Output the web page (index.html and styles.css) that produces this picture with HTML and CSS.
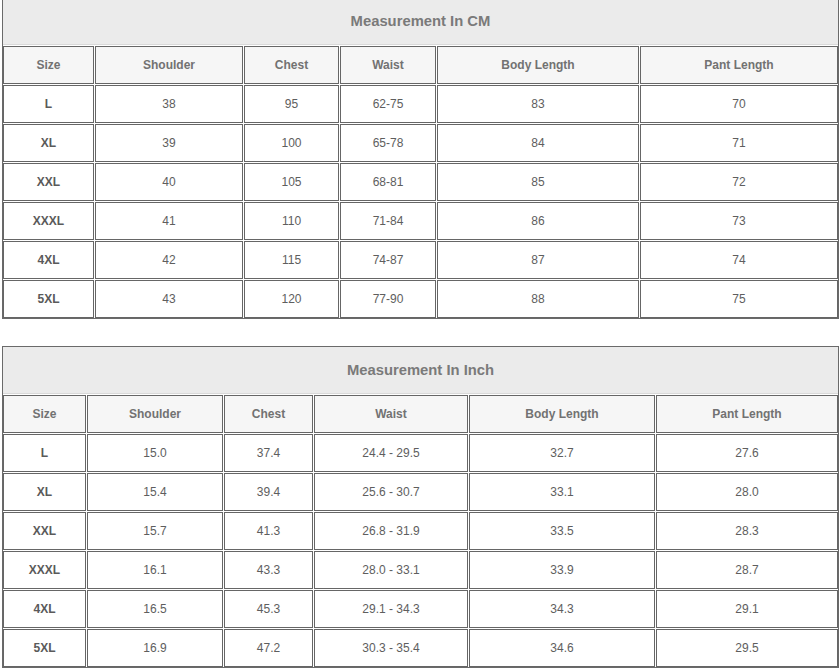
FILE: index.html
```html
<!DOCTYPE html>
<html>
<head>
<meta charset="utf-8">
<link rel="stylesheet" href="styles.css">
</head>
<body>
<div class="page">
  <div class="chart chart--cm chart--cropped">
    <div class="title">Measurement In CM</div>
    <div class="cell head">Size</div><div class="cell head">Shoulder</div><div class="cell head">Chest</div><div class="cell head">Waist</div><div class="cell head">Body Length</div><div class="cell head">Pant Length</div>
    <div class="cell size">L</div><div class="cell">38</div><div class="cell">95</div><div class="cell">62-75</div><div class="cell">83</div><div class="cell">70</div>
    <div class="cell size">XL</div><div class="cell">39</div><div class="cell">100</div><div class="cell">65-78</div><div class="cell">84</div><div class="cell">71</div>
    <div class="cell size">XXL</div><div class="cell">40</div><div class="cell">105</div><div class="cell">68-81</div><div class="cell">85</div><div class="cell">72</div>
    <div class="cell size">XXXL</div><div class="cell">41</div><div class="cell">110</div><div class="cell">71-84</div><div class="cell">86</div><div class="cell">73</div>
    <div class="cell size">4XL</div><div class="cell">42</div><div class="cell">115</div><div class="cell">74-87</div><div class="cell">87</div><div class="cell">74</div>
    <div class="cell size">5XL</div><div class="cell">43</div><div class="cell">120</div><div class="cell">77-90</div><div class="cell">88</div><div class="cell">75</div>
  </div>

  <div class="chart chart--inch">
    <div class="title">Measurement In Inch</div>
    <div class="cell head">Size</div><div class="cell head">Shoulder</div><div class="cell head">Chest</div><div class="cell head">Waist</div><div class="cell head">Body Length</div><div class="cell head">Pant Length</div>
    <div class="cell size">L</div><div class="cell">15.0</div><div class="cell">37.4</div><div class="cell">24.4 - 29.5</div><div class="cell">32.7</div><div class="cell">27.6</div>
    <div class="cell size">XL</div><div class="cell">15.4</div><div class="cell">39.4</div><div class="cell">25.6 - 30.7</div><div class="cell">33.1</div><div class="cell">28.0</div>
    <div class="cell size">XXL</div><div class="cell">15.7</div><div class="cell">41.3</div><div class="cell">26.8 - 31.9</div><div class="cell">33.5</div><div class="cell">28.3</div>
    <div class="cell size">XXXL</div><div class="cell">16.1</div><div class="cell">43.3</div><div class="cell">28.0 - 33.1</div><div class="cell">33.9</div><div class="cell">28.7</div>
    <div class="cell size">4XL</div><div class="cell">16.5</div><div class="cell">45.3</div><div class="cell">29.1 - 34.3</div><div class="cell">34.3</div><div class="cell">29.1</div>
    <div class="cell size">5XL</div><div class="cell">16.9</div><div class="cell">47.2</div><div class="cell">30.3 - 35.4</div><div class="cell">34.6</div><div class="cell">29.5</div>
  </div>
</div>
</body>
</html>
```

FILE: styles.css
```css
html, body {
  margin: 0;
  padding: 0;
  background: #ffffff;
}

.page {
  padding: 0 0 0 2px;
  font-family: "Liberation Sans", Arial, sans-serif;
}

.chart {
  display: grid;
  width: 835px;
  gap: 1px;
  border: 1px solid #6a6a6a;
  background: #ffffff;
  grid-auto-rows: 38px;
  grid-template-rows: 47px;
}

.chart--cropped {
  margin-top: -3px;
}

.chart--cm {
  grid-template-columns: 91px 148px 95px 96px 202px 198px;
}

.chart--inch {
  margin-top: 27px;
  grid-template-columns: 83px 136px 89px 154px 186px 182px;
}

.title {
  grid-column: 1 / -1;
  background: #ebebeb;
  color: #7a7a7a;
  font-weight: bold;
  font-size: 14.8px;
  display: flex;
  align-items: center;
  justify-content: center;
  border-bottom: 1px solid #d9d9d9;
}

.cell {
  box-sizing: border-box;
  border: 1px solid #666666;
  display: flex;
  align-items: center;
  justify-content: center;
  font-size: 12px;
  color: #5e5e5e;
  background: #ffffff;
}

.head {
  background: #f6f6f6;
  color: #727272;
  font-weight: bold;
}

.size {
  font-weight: bold;
  color: #5a5a5a;
}
```
